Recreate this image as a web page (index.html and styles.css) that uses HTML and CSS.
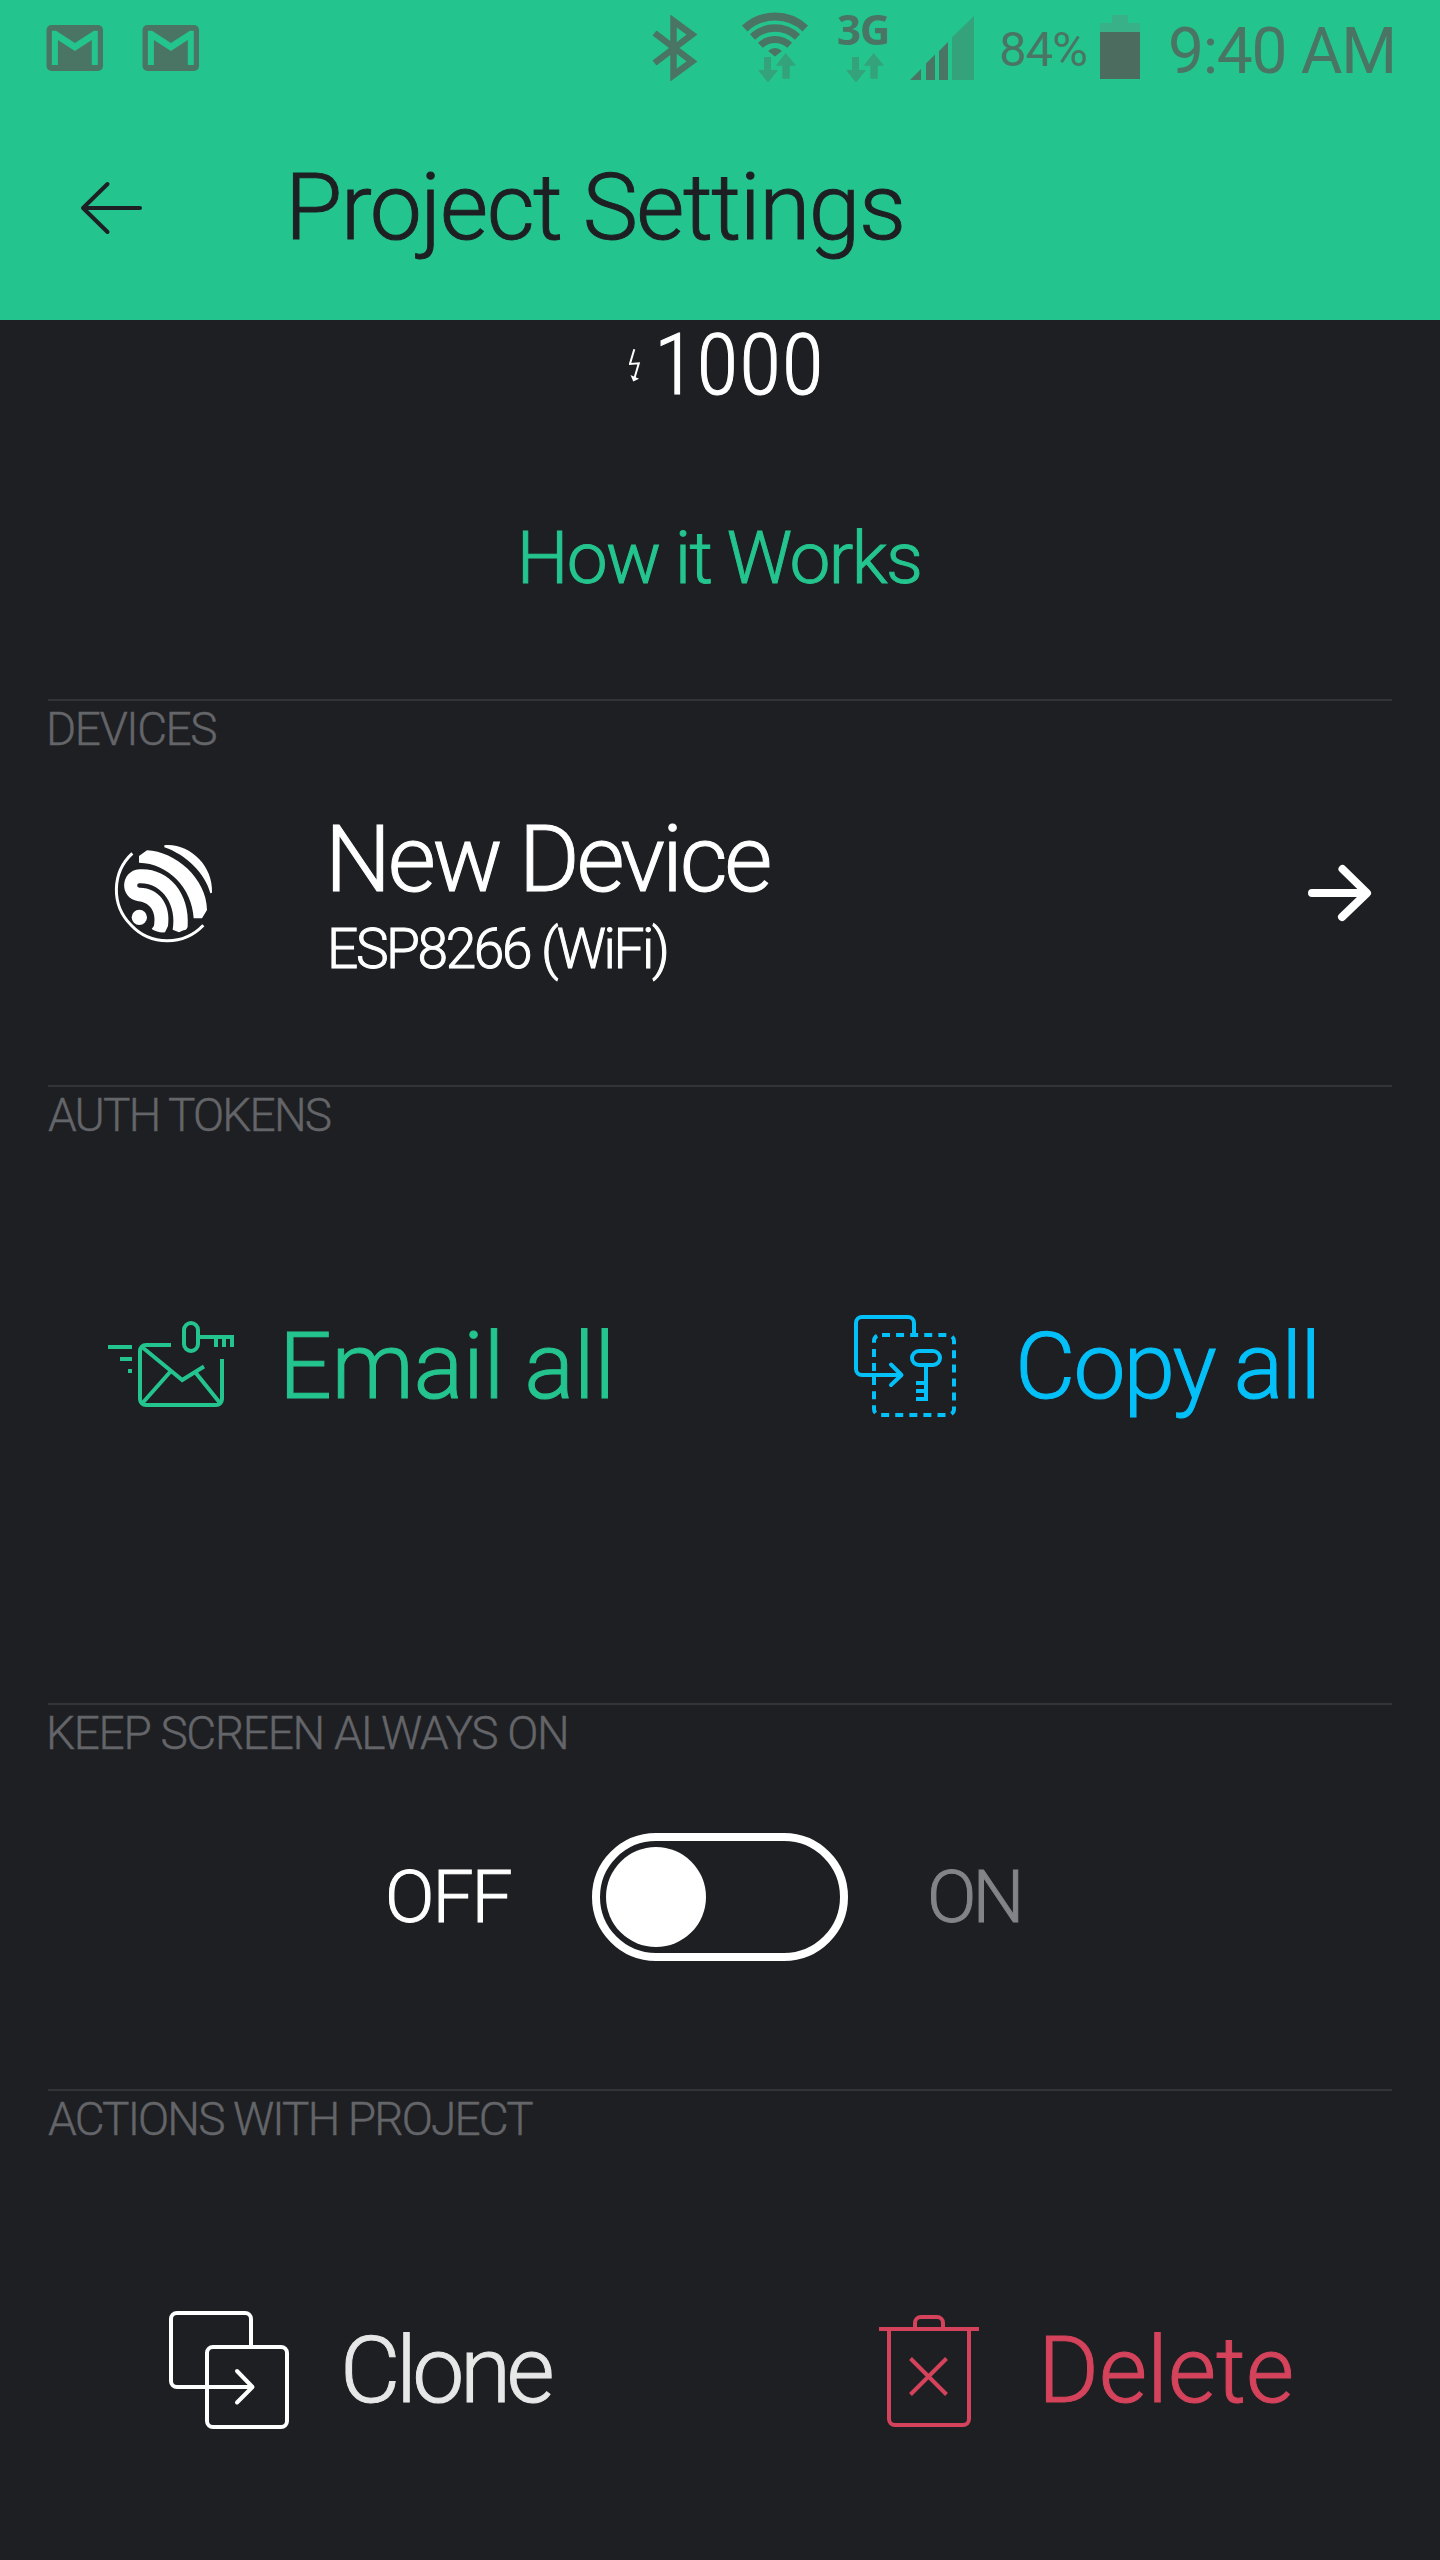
FILE: index.html
```html
<!DOCTYPE html>
<html lang="en">
<head>
<meta charset="utf-8">
<title>Project Settings</title>
<link rel="stylesheet" href="styles.css">
</head>
<body>
<header class="header">
  <div class="status">
    <svg class="gmail" width="58" height="96" viewBox="46 0 58 96"><rect x="46.5" y="25" width="56.5" height="46" rx="5"/><path class="cut" d="M51.9 30.7H56L74.9 43 94 30.7H97.8V65H91.8V40L74.9 51 57.9 40V65H51.9Z"/></svg>
    <svg class="gmail" width="58" height="96" viewBox="46 0 58 96"><rect x="46.5" y="25" width="56.5" height="46" rx="5"/><path class="cut" d="M51.9 30.7H56L74.9 43 94 30.7H97.8V65H91.8V40L74.9 51 57.9 40V65H51.9Z"/></svg>
    <svg class="bluetooth" width="50" height="96" viewBox="650 0 50 96"><path d="M654.5 33 692 61.5 673.5 75V21L692 34.5 654.5 63"/></svg>
    <svg class="wifi" width="70" height="96" viewBox="740 0 70 96">
      <path class="arc" stroke-width="8" d="M744.7 28.5A44.5 44.5 0 0 1 805.3 28.5"/>
      <path class="arc" stroke-width="7.5" d="M752.5 36.9A33 33 0 0 1 797.5 36.9"/>
      <path class="arc" stroke-width="7" d="M760.3 45.3A21.5 21.5 0 0 1 789.7 45.3"/>
      <path d="M775 56.5 768 51Q775 45 782 51Z"/>
      <path class="faint" d="M764 57H771V70H778L768 82.5 758 70H764ZM785.7 53 796 65.7H789.7V78.7H782.3V65.7H775.7Z"/>
    </svg>
    <div class="cell">
      <span class="cell-type">3G</span>
      <svg class="cell-arrows" width="54" height="44" viewBox="836 52 54 44"><path class="faint" d="M852 57H859V70H866L856 82.5 846 70H852ZM873.7 53 884 65.7H877.7V78.7H870.3V65.7H863.7Z"/></svg>
    </div>
    <svg class="signal" width="64" height="96" viewBox="910 0 64 96"><path d="M910 80 921 69V80ZM926 80V63.5L935 54.5V80ZM939 80V51L948 42V80Z"/><path class="faint" d="M952 80V37.5L974 16V80Z"/></svg>
    <span class="percent">84%</span>
    <svg class="battery" width="40" height="96" viewBox="1100 0 40 96"><path class="empty" d="M1112 15H1128V23H1140V32H1100V23H1112Z"/><path class="full" d="M1100 32H1140V79H1100Z"/></svg>
    <span class="clock">9:40 AM</span>
  </div>
  <div class="appbar">
    <svg class="line-icon back" width="66" height="60" viewBox="79 178 66 60"><path d="M140 208H83M107.500 184 83 208 107.500 232"/></svg>
    <h1 class="title">Project Settings</h1>
  </div>
</header>
<main>
  <div class="energy">
    <div class="balance">
      <svg width="24" height="90" viewBox="629 320 24 90"><path class="bolt" d="M634.300 349.300 629.900 364 638.800 363.300 634.500 378"/><path class="tip" d="M630.500 375 639 378.700 633.300 381.500Z"/></svg>
      <span class="amount">1000</span>
    </div>
    <a class="how">How it Works</a>
  </div>
  <section class="section devices">
    <h2 class="label label-stem devices-label">DEVICES</h2>
    <div class="device">
      <svg class="esp" width="120" height="120" viewBox="0 0 360 360">
        <path class="ring" d="M82 70A149 149 0 0 0 78 285A149 149 0 0 0 295 286"/>
        <circle cx="103" cy="262" r="23"/>
        <path d="M178 46C250 38 325 105 321 188L316 190C300 130 245 75 178 52Z"/>
        <path d="M102 78 126 61C210 64 305 145 306 240L291 265H266C262 175 190 100 102 98Z"/>
        <path d="M103 118C185 112 256 185 248 290Q246 299 236 301L222 307 203 299C216 230 175 158 103 160A6.500 6.500 0 0 0 103 173C160 172 199 222 189 288L180 307Q158 309 140 297L147 287C155 245 134 217 100 214C40 204 46 122 103 118Z"/>
      </svg>
      <div class="device-text">
        <span class="device-name">New Device</span>
        <span class="device-type">ESP8266 (WiFi)</span>
      </div>
      <svg class="open" width="70" height="60" viewBox="1305 863 70 60"><path d="M1312 893H1366M1342.500 869 1367 893 1342 917"/></svg>
    </div>
  </section>
  <section class="section tokens">
    <h2 class="label tokens-label">AUTH TOKENS</h2>
    <div class="actions">
      <a class="action email">
        <svg class="line-icon" width="134" height="110" viewBox="104 1311 134 110"><path d="M108 1347H132M120 1359H132M128 1371H132M171 1345H146A6 6 0 0 0 140 1351V1399A6 6 0 0 0 146 1405H216A6 6 0 0 0 222 1399V1359M142 1347 182.200 1380 204 1366.500M142.500 1403 170.500 1371.500M220 1403 195.500 1372.500M200 1337H234M216 1337V1347M224 1337V1347M232 1337V1347"/><rect x="184" y="1323" width="14" height="28" rx="7"/></svg>
        <span class="email-text">Email all</span>
      </a>
      <a class="action copy">
        <svg class="line-icon" width="110" height="110" viewBox="850 1311 110 110"><path class="round" d="M914 1334V1323A6 6 0 0 0 908 1317H862A6 6 0 0 0 856 1323V1369A6 6 0 0 0 862 1375H901M891 1364.500 901.500 1375 891 1385"/><rect class="dashed" x="874" y="1335" width="80" height="80" rx="6"/><rect x="912" y="1351" width="28" height="14" rx="7"/><path d="M926 1365V1401M916 1383H926M916 1391H926M916 1399H926"/></svg>
        <span class="copy-text">Copy all</span>
      </a>
    </div>
  </section>
  <section class="section screen">
    <h2 class="label label-stem screen-label">KEEP SCREEN ALWAYS ON</h2>
    <div class="switch-row">
      <span class="off">OFF</span>
      <span class="toggle"><span class="knob"></span></span>
      <span class="on">ON</span>
    </div>
  </section>
  <section class="section project">
    <h2 class="label project-label">ACTIONS WITH PROJECT</h2>
    <div class="actions">
      <a class="action clone">
        <svg class="line-icon" width="128" height="120" viewBox="165 2310 128 120"><path class="round" d="M251 2347V2319A6 6 0 0 0 245 2313H177A6 6 0 0 0 171 2319V2381A6 6 0 0 0 177 2387H252M237 2371 252.500 2387 237 2402.500"/><rect x="207" y="2347" width="80" height="80" rx="6"/></svg>
        <span class="clone-text">Clone</span>
      </a>
      <a class="action delete">
        <svg class="line-icon" width="108" height="120" viewBox="875 2310 108 120"><path d="M879 2329H979M915 2329V2323A6 6 0 0 1 921 2317H937A6 6 0 0 1 943 2323V2329M889 2329V2419A6 6 0 0 0 895 2425H963A6 6 0 0 0 969 2419V2329M910.500 2358.500 946.500 2394.500M946.500 2358.500 910.500 2394.500"/></svg>
        <span class="delete-text">Delete</span>
      </a>
    </div>
  </section>
</main>
</body>
</html>
```
FILE: styles.css
```css
* { box-sizing: border-box; }
body {
  margin: 0;
  width: 1440px;
  height: 2560px;
  overflow: hidden;
  background: #1e1f23;
  color: #fff;
  font-family: Roboto, "Liberation Sans", sans-serif;
  font-weight: 300;
}
h1, h2 { margin: 0; font-weight: 300; }
svg { display: block; flex: none; }
span, a { white-space: nowrap; }

.header { height: 320px; background: #24c48e; }
.status {
  display: flex;
  height: 96px;
  padding-left: 46px;
  color: #4a7565;
  fill: #4a7565;
  font-weight: 400;
}
.gmail + .gmail { margin-left: 38px; }
.cut { fill: #24c48e; }
.faint { fill: #34a27b; }
.bluetooth { margin-left: 450px; fill: none; stroke: #4a7565; stroke-width: 6.5; }
.wifi { margin-left: 40px; }
.arc { fill: none; stroke: #4a7565; }
.cell { width: 54px; margin-left: 26px; }
.cell-type {
  display: block;
  padding-left: 1px;
  font: 700 42px/58px "Open Sans", sans-serif;
  letter-spacing: -1px;
}
.cell-arrows { margin-top: -6px; }
.signal { margin-left: 20px; }
.percent {
  width: 101px;
  margin-left: 25px;
  font-size: 49px;
  line-height: 99px;
  letter-spacing: -1px;
}
.empty { fill: #39b188; }
.full { fill: #4c6c60; }
.clock {
  margin-left: 28px;
  font-size: 64px;
  line-height: 103px;
  letter-spacing: -1.3px;
}

.appbar {
  display: flex;
  align-items: center;
  height: 224px;
  padding-left: 79px;
  color: #1e1f23;
}
.back { stroke-linecap: round; stroke-linejoin: round; }
.title {
  margin: -1px 0 0 140px;
  font-size: 93px;
  letter-spacing: -1.5px;
}
.title, .amount, .how, .device-text, .action, .switch-row { -webkit-text-stroke: 1px currentColor; }
.label { -webkit-text-stroke: 0.4px currentColor; }

.line-icon { fill: none; stroke: currentColor; stroke-width: 4; }
.round { stroke-linecap: round; stroke-linejoin: round; }
.dashed { stroke-dasharray: 8 6.08; stroke-dashoffset: -2; }

.energy { height: 379px; text-align: center; }
.balance { display: flex; padding-left: 629px; }
.bolt { fill: none; stroke: #fff; stroke-width: 2; }
.tip { fill: #fff; }
.amount {
  margin-left: 1px;
  font-size: 86px;
  line-height: 89px;
  font-stretch: 75%;
  letter-spacing: 0.8px;
}
.how {
  display: block;
  margin-top: 108px;
  padding-right: 2px;
  color: #24c48e;
  font-size: 73px;
  line-height: 80px;
  letter-spacing: -1.6px;
  word-spacing: -1px;
}

.section { margin: 0 48px; border-top: 2px solid #333438; }
.devices, .screen { height: 386px; }
.tokens { height: 618px; }
.label { color: #646569; font-size: 46px; line-height: 57px; }
.label-stem { margin-left: -2px; }
.devices-label { letter-spacing: -1.45px; }
.tokens-label { letter-spacing: -1.8px; }
.screen-label { letter-spacing: -1.3px; }
.project-label { letter-spacing: -1.85px; }

.device {
  display: flex;
  align-items: center;
  height: 180px;
  margin-top: 56px;
  padding: 0 17px 0 57px;
}
.esp { margin-top: -28px; fill: #fff; }
.ring { fill: none; stroke: #fff; stroke-width: 9; }
.device-text { margin-left: 100px; }
.device-name, .device-type { display: block; line-height: 90px; }
.device-name { padding-top: 1px; font-size: 93px; letter-spacing: -3.3px; }
.device-type { margin: -1px 0 0 2px; font-size: 55px; letter-spacing: -2.4px; }
.open {
  margin: -22px 0 0 auto;
  fill: none;
  stroke: #fff;
  stroke-width: 8;
  stroke-linecap: round;
  stroke-linejoin: round;
}

.actions { display: grid; grid-template-columns: 672px 672px; }
.action { display: flex; align-items: center; font-size: 93px; line-height: 108px; }
.action span { padding-top: 1px; }
.tokens .actions { margin-top: 167px; }
.project .actions { margin-top: 162px; }
.email { padding-left: 56px; color: #24c48e; }
.email-text { margin-left: 41px; letter-spacing: -0.4px; word-spacing: -2px; }
.copy { padding-left: 130px; color: #04c0f8; }
.copy-text { margin-left: 55px; letter-spacing: -2px; word-spacing: -2px; }
.clone { padding-left: 117px; }
.clone-text { margin-left: 47px; color: #e7e7e7; letter-spacing: -4.5px; }
.delete { padding-left: 155px; color: #d4435b; }
.delete-text { margin-left: 55px; }

.switch-row {
  display: flex;
  align-items: center;
  margin-top: 71px;
  padding-left: 337px;
  font-size: 73px;
}
.off { width: 207px; letter-spacing: -2px; }
.on { margin-left: 79px; color: #838488; letter-spacing: -4px; }
.toggle {
  width: 256px;
  height: 128px;
  padding: 6px;
  border: 8px solid #fff;
  border-radius: 64px;
}
.knob { display: block; width: 100px; height: 100px; border-radius: 50%; background: #fff; }
```
